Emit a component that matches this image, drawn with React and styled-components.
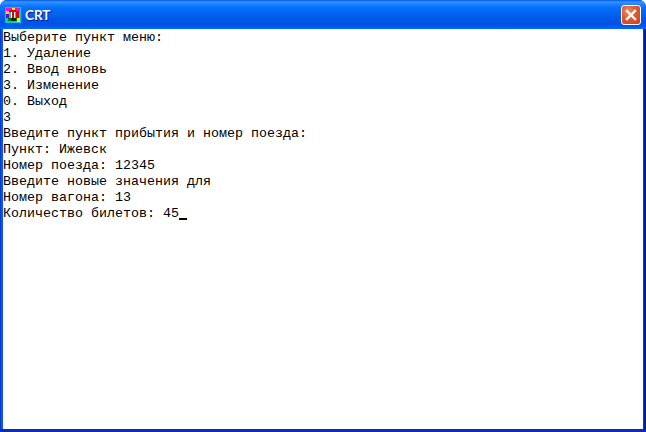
import React from "react";
import styled, { createGlobalStyle } from "styled-components";

const GlobalStyle = createGlobalStyle`
  html, body {
    margin: 0;
    padding: 0;
    background: #ffffff;
  }
`;

const Window = styled.div`
  width: 646px;
  height: 432px;
  display: flex;
  flex-direction: column;
  overflow: hidden;
  border-radius: 7px 7px 0 0;
  background: #0831d9;
`;

const TitleBar = styled.div`
  height: 29px;
  flex: none;
  box-sizing: border-box;
  display: flex;
  align-items: center;
  gap: 4px;
  padding: 1px 5px 0 5px;
  background: linear-gradient(
    180deg,
    #0058e6 0,
    #3a93ff 2px,
    #288eff 3px,
    #127dff 5px,
    #036ffc 8px,
    #0262ee 14px,
    #0057e5 19px,
    #0054e3 23px,
    #0055eb 26px,
    #005bf5 27px,
    #026afe 28px,
    #0062ef 29px
  );
`;

const AppIcon = styled.svg`
  width: 16px;
  height: 16px;
  flex: none;
  display: block;
`;

const Title = styled.span`
  flex: 1;
  font-family: Lato, "Liberation Sans", sans-serif;
  font-size: 13.5px;
  font-weight: 700;
  color: #ffffff;
  text-shadow: 1px 1px 0 #0f1089;
`;

const CloseButton = styled.div`
  width: 20px;
  height: 20px;
  box-sizing: border-box;
  border: 1px solid #ffffff;
  border-radius: 3px;
  background: radial-gradient(circle at 35% 30%, #ee8a66 0, #e2582f 45%, #c8401c 100%);
  display: flex;
  align-items: center;
  justify-content: center;
`;

const Frame = styled.div`
  flex: 1;
  min-height: 0;
  display: flex;
  padding: 0 3px 3px;
  background:
    linear-gradient(0deg, #0a2ab8 3px, transparent 3px),
    linear-gradient(90deg, #0a3ac8 1px, #0855f0 1px, #0855f0 3px, #0040d8 3px, #0040d8 calc(100% - 2px), #001ea0 calc(100% - 2px));
`;

const Console = styled.pre`
  flex: 1;
  margin: 0;
  padding: 1px 0 0;
  background: #ffffff;
  color: #000000;
  font-family: "Liberation Mono", "Courier New", monospace;
  font-size: 13.333px;
  line-height: 16px;
`;

const Cursor = styled.span`
  display: inline-block;
  width: 8px;
  height: 2px;
  background: #000000;
  vertical-align: -3px;
`;

const iconCells = [
  [0, 0, 16, 16, "#00c8e8"],
  [1, 1, 6, 3, "#ff00ff"],
  [7, 1, 3, 2, "#ffee00"],
  [10, 1, 5, 3, "#ff1493"],
  [1, 4, 3, 3, "#ffd800"],
  [1, 7, 3, 4, "#7b00d0"],
  [4, 3, 7, 2, "#e00000"],
  [6, 5, 4, 6, "#ffffff"],
  [7, 5, 2, 7, "#e00000"],
  [11, 4, 3, 8, "#e00000"],
  [4, 5, 2, 6, "#00c8e8"],
  [3, 11, 9, 3, "#008000"],
  [6, 11, 5, 3, "#002800"],
  [12, 11, 3, 4, "#ffee00"],
];

const lines = [
  "Выберите пункт меню:",
  "1. Удаление",
  "2. Ввод вновь",
  "3. Изменение",
  "0. Выход",
  "3",
  "Введите пункт прибытия и номер поезда:",
  "Пункт: Ижевск",
  "Номер поезда: 12345",
  "Введите новые значения для",
  "Номер вагона: 13",
];

const App = () => {
  return (
    <React.Fragment>
      <GlobalStyle />
      <Window>
        <TitleBar>
          <AppIcon viewBox="0 0 16 16" shapeRendering="crispEdges">
            {iconCells.map(([x, y, width, height, fill], i) => (
              <rect key={i} x={x} y={y} width={width} height={height} fill={fill} />
            ))}
          </AppIcon>
          <Title>CRT</Title>
          <CloseButton>
            <svg width="12" height="12" viewBox="0 0 12 12">
              <path d="M2 2 L10 10 M10 2 L2 10" stroke="#ffffff" strokeWidth="2.4" strokeLinecap="square" />
            </svg>
          </CloseButton>
        </TitleBar>
        <Frame>
          <Console>
            {lines.join("\n")}
            {"\nКоличество билетов: 45"}
            <Cursor />
          </Console>
        </Frame>
      </Window>
    </React.Fragment>
  );
};

export default App;
